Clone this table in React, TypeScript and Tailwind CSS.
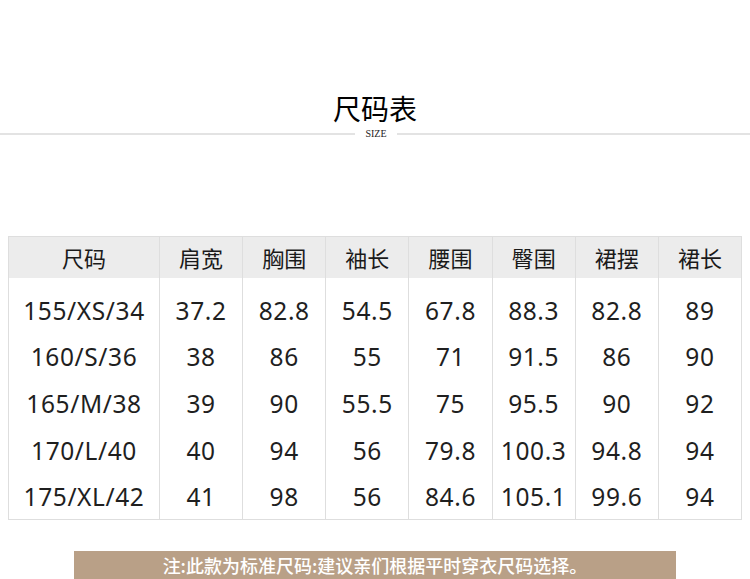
import React from "react";

const headers = ["尺码", "肩宽", "胸围", "袖长", "腰围", "臀围", "裙摆", "裙长"];
const rows = [
  ["155/XS/34", "37.2", "82.8", "54.5", "67.8", "88.3", "82.8", "89"],
  ["160/S/36", "38", "86", "55", "71", "91.5", "86", "90"],
  ["165/M/38", "39", "90", "55.5", "75", "95.5", "90", "92"],
  ["170/L/40", "40", "94", "56", "79.8", "100.3", "94.8", "94"],
  ["175/XL/42", "41", "98", "56", "84.6", "105.1", "99.6", "94"],
];

export default function App() {
  return (
    <div className="w-[750px] h-[579px] bg-white overflow-hidden flex flex-col" style={{ fontFamily: '"Noto Sans", "Noto Sans CJK SC", sans-serif' }}>
      <div className="mt-[94px] h-[28px] flex justify-center items-center">
        <span className="text-[28px] leading-none text-black" style={{ fontFamily: '"Noto Sans CJK SC", sans-serif' }}>尺码表</span>
      </div>
      <div className="mt-[6px] h-[13px] flex items-center">
        <div className="w-[355px] h-[2px] bg-[#e3e3e3]" />
        <span className="flex-1 text-center text-[10px] leading-none text-[#222]" style={{ fontFamily: '"Liberation Serif", serif' }}>SIZE</span>
        <div className="w-[353px] h-[2px] bg-[#e3e3e3]" />
      </div>
      <div className="mt-[96px] ml-[8px] w-[734px] border border-[#dedede]">
        <div className="grid grid-cols-[150px_repeat(7,1fr)] h-[41px] bg-[#ececec]">
          {headers.map((h, i) => (
            <div key={i} className={`flex items-center justify-center text-[22px] text-[#1a1a1a] ${i > 0 ? "border-l border-[#dedede]" : ""}`} style={{ fontFamily: '"Noto Sans CJK SC", sans-serif' }}>
              {h}
            </div>
          ))}
        </div>
        {rows.map((r, ri) => (
          <div key={ri} className={`grid grid-cols-[150px_repeat(7,1fr)] ${ri === 0 ? "h-[54.7px]" : "h-[46.7px]"}`}>
            {r.map((c, i) => (
              <div key={i} className={`flex items-center justify-center text-[24.5px] tracking-[0.6px] text-[#1f1f1f] ${ri === 0 ? "pt-[12px]" : "pt-[4px]"} ${i > 0 ? "border-l border-[#dedede]" : ""}`}>
                {c}
              </div>
            ))}
          </div>
        ))}
      </div>
      <div className="mt-[31px] ml-[74px] w-[602px] h-[28px] shrink-0 bg-[#b9a087] flex items-center justify-center">
        <span className="text-[18px] leading-none text-white font-medium" style={{ fontFamily: '"Noto Sans CJK SC", sans-serif' }}>注:此款为标准尺码:建议亲们根据平时穿衣尺码选择。</span>
      </div>
    </div>
  );
}
